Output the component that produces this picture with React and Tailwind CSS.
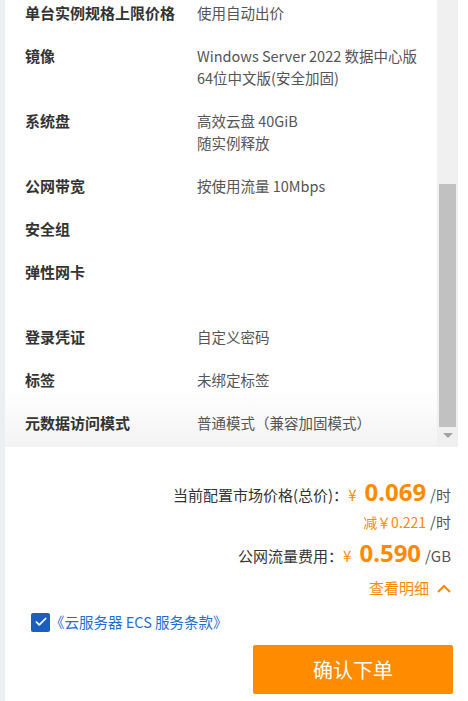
import React from 'react'
import { Check } from 'lucide-react'

const rows = [
  { label: '单台实例规格上限价格', value: ['使用自动出价'] },
  { label: '镜像', value: ['Windows Server 2022 数据中心版', '64位中文版(安全加固)'] },
  { label: '系统盘', value: ['高效云盘 40GiB', '随实例释放'] },
  { label: '公网带宽', value: ['按使用流量 10Mbps'] },
  { label: '安全组', value: [] },
  { label: '弹性网卡', value: [], tall: true },
  { label: '登录凭证', value: ['自定义密码'] },
  { label: '标签', value: ['未绑定标签'] },
  { label: '元数据访问模式', value: ['普通模式（兼容加固模式）'] }
]

const num = { fontFamily: '"Noto Sans", sans-serif' }

export default function App() {
  return (
    <div
      className="w-[468px] h-[701px] overflow-hidden bg-white border-l-[5px] border-[#eceef2] text-[15px] flex flex-col"
      style={{ fontFamily: '"Noto Sans CJK SC", "Noto Sans", sans-serif' }}
    >
      {/* Config list with scrollbar */}
      <div className="h-[447px] flex shrink-0">
        <div className="flex-1 pt-[2px] pl-[20px] flex flex-col gap-[21px] bg-linear-to-b from-white from-[87%] to-[#f3f3f3]">
          {rows.map((row, i) => (
            <div key={i} className={`flex leading-[22px] ${row.tall ? 'min-h-[44px]' : ''}`}>
              <div className="w-[172px] shrink-0 font-bold text-[#333]">{row.label}</div>
              <div className="text-[#555] text-[14.5px]">
                {row.value.map((v, j) => (
                  <div key={j}>{v}</div>
                ))}
              </div>
            </div>
          ))}
        </div>
        <div className="w-[21px] bg-[#f0f0f0] flex flex-col items-center pt-[184px]">
          <div className="w-[17px] h-[243px] bg-[#c1c1c1]" />
          <svg width="10" height="6" viewBox="0 0 10 6" className="mt-[6px]">
            <path d="M0 0 L10 0 L5 5 Z" fill="#a3a3a3" />
          </svg>
        </div>
        <div className="w-[10px]" />
      </div>

      {/* Price summary */}
      <div className="pt-[29px] pr-[17px] flex flex-col items-end">
        <div className="flex items-baseline h-[32px] text-[#333]">
          <span>当前配置市场价格(总价)：</span>
          <span className="text-[#ff8a00] mr-[8px]">¥</span>
          <span className="text-[#ff8a00] text-[24px] font-bold leading-[32px]" style={num}>0.069</span>
          <span className="ml-[4px] text-[#555]">/时</span>
        </div>
        <div className="flex items-baseline h-[22px] mt-[3px] text-[14px] leading-[22px]">
          <span className="text-[#ff8a00]">减￥0.221</span>
          <span className="ml-[4px] text-[#555] text-[15px]">/时</span>
        </div>
        <div className="flex items-baseline h-[32px] mt-[4px] text-[#333]">
          <span>公网流量费用：</span>
          <span className="text-[#ff8a00] mr-[8px]">¥</span>
          <span className="text-[#ff8a00] text-[24px] font-bold leading-[32px]" style={num}>0.590</span>
          <span className="ml-[4px] text-[#555]">/GB</span>
        </div>
        <div className="flex items-center h-[22px] mt-[8px] text-[#ff8a00] gap-[8px]">
          <span>查看明细</span>
          <svg width="14" height="9" viewBox="0 0 14 9" fill="none">
            <path d="M1 8 L7 2 L13 8" stroke="#ff8a00" strokeWidth="2" />
          </svg>
        </div>
      </div>

      {/* Agreement */}
      <div className="flex items-center mt-[13px] pl-[26px] h-[20px]">
        <div className="w-[19px] h-[19px] rounded-[2px] bg-[#1a5fbf] flex items-center justify-center">
          <Check size={14} strokeWidth={3} className="text-white" />
        </div>
        <span className="text-[#1f6fd1] text-[14.5px]">《云服务器 ECS 服务条款》</span>
      </div>

      {/* Submit */}
      <div className="flex justify-end pr-[15px] mt-[13px]">
        <button className="w-[200px] h-[49px] rounded-[2px] bg-[#ff8c00] text-white text-[20px]">
          确认下单
        </button>
      </div>
    </div>
  )
}
